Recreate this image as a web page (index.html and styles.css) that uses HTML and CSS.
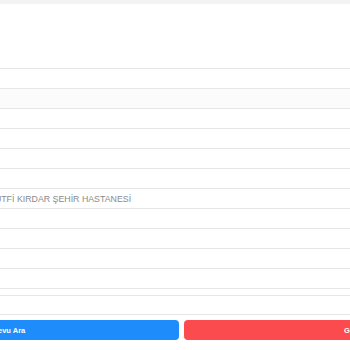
FILE: index.html
```html
<!DOCTYPE html>
<html lang="tr">
<head>
<meta charset="utf-8">
<link rel="stylesheet" href="styles.css">
</head>
<body>
<div class="topbar"></div>
<div class="page">
  <div class="form">
    <div class="row"></div>
    <div class="row alt"></div>
    <div class="row"></div>
    <div class="row"></div>
    <div class="row"></div>
    <div class="row"></div>
    <div class="row"><span class="val">LÜTFİ KIRDAR ŞEHİR HASTANESİ</span></div>
    <div class="row"></div>
    <div class="row"></div>
    <div class="row"></div>
    <div class="row"></div>
    <div class="row thin"></div>
    <div class="row last"></div>
  </div>
  <div class="actions">
    <button class="btn primary">Randevu Ara</button>
    <button class="btn danger">Geri Dön</button>
  </div>
</div>
</body>
</html>
```

FILE: styles.css
```css
html, body {
  margin: 0;
  padding: 0;
  background: #ffffff;
  overflow: hidden;
  width: 350px;
  height: 350px;
  font-family: "Liberation Sans", Arial, sans-serif;
}
.topbar {
  height: 4px;
  background: #f3f3f3;
}
.page {
  margin-left: -174px;
  width: 710px;
  padding-top: 64px;
}
.form {
  border-top: 1px solid #e6e6e6;
}
.row {
  height: 19px;
  border-bottom: 1px solid #e6e6e6;
  display: flex;
  align-items: center;
}
.row.alt {
  background: #fbfbfb;
}
.row.thin {
  height: 6px;
}
.row.last {
  height: 18px;
}
.val {
  font-size: 8.8px;
  color: #8a8a8a;
  padding-left: 164px;
}
.actions {
  display: flex;
  gap: 5px;
  margin-top: 5px;
}
.btn {
  flex: 1;
  height: 20px;
  border: none;
  border-radius: 4px;
  color: #ffffff;
  font-family: "Liberation Sans", Arial, sans-serif;
  font-size: 7.5px;
  font-weight: bold;
  padding: 0;
}
.btn.primary {
  background: #1e8cfa;
}
.btn.danger {
  background: #fb4b4f;
}
```
